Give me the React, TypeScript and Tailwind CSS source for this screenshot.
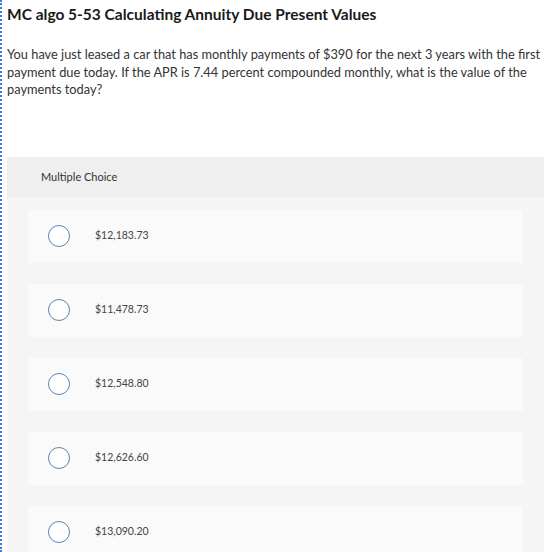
const choices = ['$12,183.73', '$11,478.73', '$12,548.80', '$12,626.60', '$13,090.20']

function Radio() {
  return <span className="block h-[22px] w-[22px] shrink-0 rounded-full border-[1.5px] border-[#5a84b3] bg-white" />
}

export default function App() {
  return (
    <div className="h-[552px] overflow-hidden bg-white font-['Lato',sans-serif] text-[#333]">
      <div className="h-full border-l-2 border-dotted border-[#3b78d8] pl-[5px] pr-[14px]">
        <h1 className="pt-[4px] text-[15.5px] font-bold leading-[20px] text-[#1a1a1a]">
          MC algo 5-53 Calculating Annuity Due Present Values
        </h1>
        <p className="mt-[22px] text-[12.8px] leading-[17.5px] text-[#333]">
          You have just leased a car that has monthly payments of $390 for the next 3 years with the first payment due today. If the APR is 7.44 percent compounded monthly, what is the value of the payments today?
        </p>

        <div className="mt-[58px] mr-[2px] bg-[#f5f5f5]">
          <div className="flex h-[40px] items-center bg-[#efefef] pl-[34px] pt-[1px] text-[11px] text-[#333]">
            Multiple Choice
          </div>
          <div className="flex flex-col gap-[21px] px-[21px] pt-[13px]">
            {choices.map(c => (
              <div key={c} className="flex h-[53px] items-center bg-[#fafafa] pl-[20px]">
                <Radio />
                <span className="ml-[25px] text-[10.5px] text-[#444]">{c}</span>
              </div>
            ))}
          </div>
        </div>
      </div>
    </div>
  )
}
